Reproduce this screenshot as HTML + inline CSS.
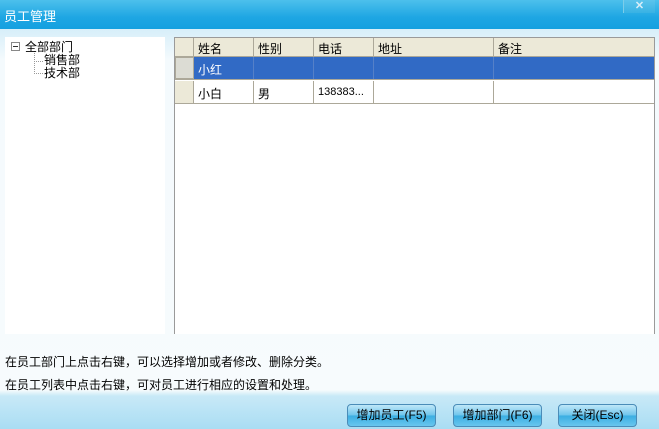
<!DOCTYPE html>
<html><head><meta charset="utf-8"><style>
*{margin:0;padding:0;box-sizing:border-box}
body{width:659px;height:429px;overflow:hidden;font-family:"Liberation Sans","WenQuanYi Zen Hei","Noto Sans CJK SC",sans-serif;font-size:12px;color:#000;position:relative;background:linear-gradient(#d6eef9 28px,#f4fafd 60px,#f7fbfd 390px,#c8e9f7 396px,#a9ddf3 429px)}
.title{position:absolute;left:0;top:0;width:659px;height:29px;background:linear-gradient(#4cc0ec,#1ea6e3 60%,#14a0e0);color:#fff;font-size:13px;padding:6px 0 0 4px}
.x{position:absolute;left:623px;top:0;width:32px;height:13px;background:linear-gradient(#5cc4ec,#38b2e4);border-left:1px solid #7ccde9;color:#d8eef8;font-weight:bold;font-size:11px;text-align:center;line-height:12px}
.tree{position:absolute;left:5px;top:37px;width:160px;height:297px;background:#fff}
.grid{position:absolute;left:174px;top:37px;width:481px;height:297px;background:#fff;border:1px solid #9a9a9a;border-bottom:none}
.c{position:absolute;height:100%;padding:2px 0 0 4px;white-space:nowrap;overflow:hidden}
.row{position:absolute;left:0;width:479px}
.t{position:absolute;font-size:12px}
.btn{position:absolute;top:404px;height:23px;border:1px solid #4a8cb8;border-radius:4px;background:linear-gradient(#bfe7f8,#6cc4ec 50%,#3aaee2 51%,#68c6ee);font-size:12px;text-align:center;line-height:21px;color:#000}
</style></head><body>
<div class="title">员工管理</div>
<div class="x">✕</div>
<div class="tree">
<div style="position:absolute;left:6px;top:5px;width:9px;height:9px;border:1px solid #888;background:#fff"><div style="position:absolute;left:1px;top:3px;width:5px;height:1px;background:#333"></div></div>
<div style="position:absolute;left:29px;top:14px;height:23px;border-left:1px dotted #999"></div>
<div style="position:absolute;left:29px;top:24px;width:9px;border-top:1px dotted #999"></div>
<div style="position:absolute;left:29px;top:36px;width:9px;border-top:1px dotted #999"></div>
<div class="t" style="left:20px;top:1px">全部部门</div>
<div class="t" style="left:39px;top:14px">销售部</div>
<div class="t" style="left:39px;top:27px">技术部</div>
</div>
<div class="grid">
<div class="row" style="top:0;height:19px;background:#ece9d8;border-bottom:1px solid #aca899">
<div class="c" style="left:0;width:19px;border-right:1px solid #aca899"></div>
<div class="c" style="left:19px;width:60px;border-right:1px solid #aca899">姓名</div>
<div class="c" style="left:79px;width:60px;border-right:1px solid #aca899">性别</div>
<div class="c" style="left:139px;width:60px;border-right:1px solid #aca899">电话</div>
<div class="c" style="left:199px;width:120px;border-right:1px solid #aca899">地址</div>
<div class="c" style="left:319px;width:160px">备注</div>
</div>
<div class="row" style="top:19px;height:23px;border-bottom:1px solid #aca899">
<div class="c" style="left:0;width:19px;background:#dcdcd4;border:1px solid #aca899"></div>
<div class="c" style="left:19px;width:460px;background:#316ac5"></div>
<div class="c" style="left:19px;width:60px;color:#fff;padding-top:4px;border-right:1px solid #5580c8">小红</div>
<div class="c" style="left:79px;width:60px;border-right:1px solid #5580c8"></div>
<div class="c" style="left:139px;width:60px;border-right:1px solid #5580c8"></div>
<div class="c" style="left:199px;width:120px;border-right:1px solid #5580c8"></div>
</div>
<div class="row" style="top:43px;height:23px;border-bottom:1px solid #aca899">
<div class="c" style="left:0;width:19px;background:#ece9d8;border-right:1px solid #aca899"></div>
<div class="c" style="left:19px;width:60px;padding-top:4px;border-right:1px solid #aca899">小白</div>
<div class="c" style="left:79px;width:60px;padding-top:4px;border-right:1px solid #aca899">男</div>
<div class="c" style="left:139px;width:60px;padding-top:5px;font-size:11px;border-right:1px solid #aca899">138383...</div>
<div class="c" style="left:199px;width:120px;border-right:1px solid #aca899"></div>
</div>
</div>
<div class="t" style="left:5px;top:353px">在员工部门上点击右键，可以选择增加或者修改、删除分类。</div>
<div class="t" style="left:5px;top:376px">在员工列表中点击右键，可对员工进行相应的设置和处理。</div>
<div class="btn" style="left:347px;width:89px">增加员工(F5)</div>
<div class="btn" style="left:453px;width:89px">增加部门(F6)</div>
<div class="btn" style="left:558px;width:79px">关闭(Esc)</div>
</body></html>
